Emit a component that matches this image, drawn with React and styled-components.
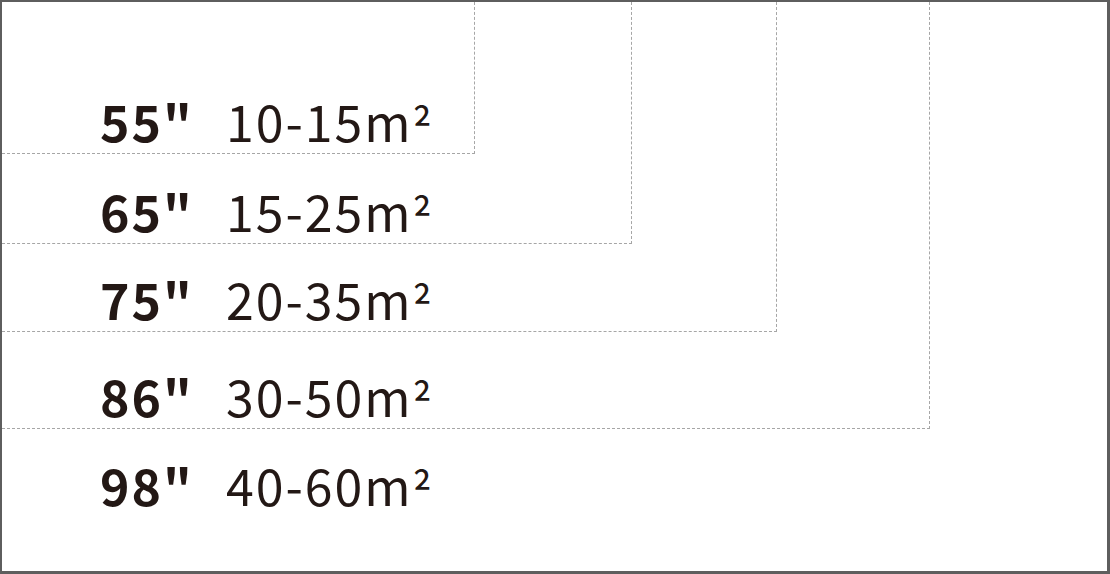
import React from "react";
import styled, { createGlobalStyle } from "styled-components";

const GlobalStyle = createGlobalStyle`
  html, body {
    margin: 0;
    padding: 0;
    background: #ffffff;
  }
  * {
    box-sizing: border-box;
  }
`;

const Frame = styled.div`
  width: 1110px;
  height: 574px;
  border: 2px solid #5e5e5e;
  border-right-width: 3px;
  border-bottom-width: 3px;
  background: #ffffff;
  display: flex;
  flex-direction: column;
  font-family: "Noto Sans CJK SC", "Open Sans", sans-serif;
  color: #231815;
  overflow: hidden;
`;

const Box = styled.div`
  width: ${(p) => p.$w}px;
  height: ${(p) => p.$h}px;
  flex: none;
  display: flex;
  flex-direction: column;
  border-right: 1px dashed #a6a6a6;
  border-bottom: 1px dashed #a6a6a6;
`;

const Row = styled.div`
  flex: 1;
  display: flex;
  align-items: flex-end;
  padding-left: 98px;
  padding-bottom: ${(p) => p.$pb}px;
  font-size: 50px;
  line-height: 1;
`;

const Size = styled.span`
  width: 126px;
  font-weight: 700;
  letter-spacing: 2px;
`;

const Area = styled.span`
  font-weight: 400;
  letter-spacing: 2px;
`;

const Sup = styled.span`
  font-size: 46px;
  letter-spacing: 0;
  position: relative;
  top: 4px;
`;

const Line = ({ size, area, pb = 8 }) => (
  <Row $pb={pb}>
    <Size>{size}"</Size>
    <Area>
      {area}m<Sup>²</Sup>
    </Area>
  </Row>
);

export default function App() {
  return (
    <>
      <GlobalStyle />
      <Frame>
        <Box $w={928} $h={427}>
          <Box $w={775} $h={330}>
            <Box $w={630} $h={242}>
              <Box $w={473} $h={152}>
                <Line size="55" area="10-15" />
              </Box>
              <Line size="65" area="15-25" />
            </Box>
            <Line size="75" area="20-35" />
          </Box>
          <Line size="86" area="30-50" />
        </Box>
        <Line size="98" area="40-60" pb={62} />
      </Frame>
    </>
  );
}
